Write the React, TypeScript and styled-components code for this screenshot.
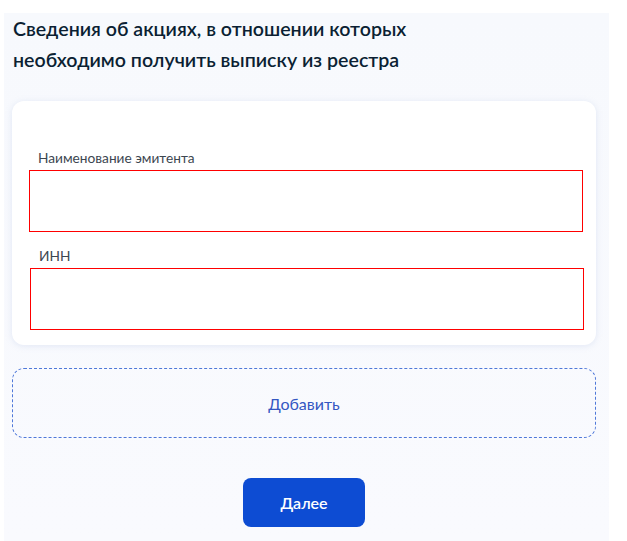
import React from 'react';
import styled, { createGlobalStyle } from 'styled-components';

const GlobalStyle = createGlobalStyle`
  body {
    margin: 0;
    background: #ffffff;
    font-family: Lato, "Noto Sans", sans-serif;
  }
`;

const Page = styled.div`
  background: linear-gradient(180deg, #f7f9fd 0%, #f9fafe 100%);
  box-sizing: border-box;
  margin: 14px 0 0 4px;
  min-height: 527px;
  padding: 0 13px 14px 8px;
  width: 605px;
`;

const Title = styled.h1`
  color: #0b1f33;
  font-size: 19.6px;
  font-weight: 600;
  line-height: 31px;
  margin: -1px 0 0;
  padding: 0 0 0 1px;
`;

const Card = styled.section`
  background: #ffffff;
  border-radius: 12px;
  box-shadow: 0 1px 6px rgba(160, 180, 220, 0.25);
  box-sizing: border-box;
  display: flex;
  flex-direction: column;
  gap: 15px;
  margin-top: 26px;
  padding: 48px 13px 15px 17px;
`;

const Field = styled.div<{ $shift?: number }>`
  display: flex;
  flex-direction: column;
  gap: 4px;
  margin-left: ${({ $shift }) => $shift ?? 0}px;
  margin-right: ${({ $shift }) => -($shift ?? 0)}px;
`;

const Label = styled.label`
  color: #3c4650;
  font-size: 13.7px;
  line-height: 17px;
  padding-left: 9px;
`;

const Input = styled.input`
  border: 1px solid #ff0000;
  border-radius: 0;
  box-sizing: border-box;
  height: 62px;
  outline: none;
  width: 100%;
`;

const AddBox = styled.button`
  align-items: center;
  background: transparent;
  border: 1px dashed #4f78d9;
  border-radius: 12px;
  color: #3457c2;
  cursor: pointer;
  display: flex;
  font-family: inherit;
  font-size: 16px;
  height: 70px;
  justify-content: center;
  margin-top: 23px;
  width: 100%;
`;

const Actions = styled.div`
  display: flex;
  justify-content: center;
  margin-top: 40px;
`;

const NextButton = styled.button`
  background: #0d4cd3;
  border: 0;
  border-radius: 8px;
  color: #ffffff;
  cursor: pointer;
  font-family: inherit;
  font-size: 16px;
  font-weight: 600;
  height: 49px;
  width: 122px;
`;

export default function App() {
  return (
    <>
      <GlobalStyle />
      <Page>
        <Title>
          Сведения об акциях, в отношении которых
          <br />
          необходимо получить выписку из реестра
        </Title>
        <Card>
          <Field>
            <Label>Наименование эмитента</Label>
            <Input type="text" />
          </Field>
          <Field $shift={1}>
            <Label>ИНН</Label>
            <Input type="text" />
          </Field>
        </Card>
        <AddBox type="button">Добавить</AddBox>
        <Actions>
          <NextButton type="button">Далее</NextButton>
        </Actions>
      </Page>
    </>
  );
}
